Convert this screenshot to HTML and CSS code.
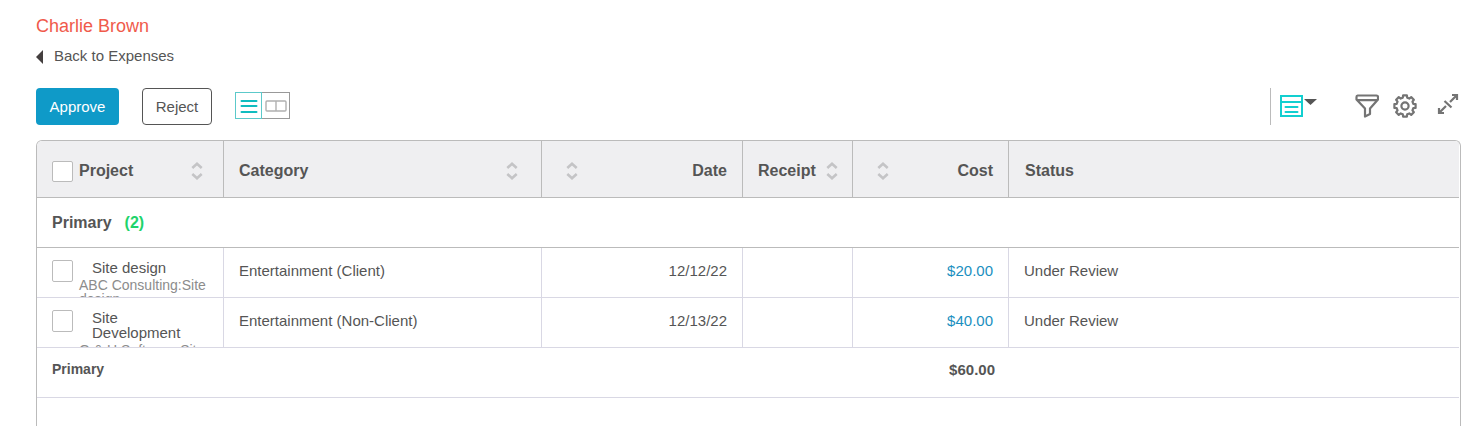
FILE: index.html
```html
<!DOCTYPE html>
<html lang="en">
<head>
<meta charset="utf-8">
<title>Expenses - Charlie Brown</title>
<link rel="stylesheet" href="styles.css">
</head>
<body>
<svg class="defs" aria-hidden="true">
  <symbol id="sort" viewBox="0 0 12 18"><path d="M1.300 6 6 1.800 10.700 6M1.300 12 6 16.200 10.700 12" fill="none" stroke="#c4c4c6" stroke-width="2.600"/></symbol>
</svg>
<header class="page-head">
  <h1 class="title">Charlie Brown</h1>
  <a class="back" href="#"><svg class="back-icon" viewBox="0 0 8 14" aria-hidden="true"><path d="M7 0v14L0 7z" fill="#443f3f"/></svg>Back to Expenses</a>
</header>
<div class="toolbar">
  <button class="btn btn-primary" type="button">Approve</button>
  <button class="btn btn-outline" type="button">Reject</button>
  <div class="view-toggle">
    <button class="view view-on" type="button" aria-label="List view"><svg width="18" height="16" viewBox="0 0 18 16"><path d="M1.500 3h15M1.500 8h15M1.500 14h15" stroke="#0fbcbf" stroke-width="2" stroke-linecap="round"/></svg></button>
    <button class="view" type="button" aria-label="Split view"><svg width="22" height="12" viewBox="0 0 22 12"><rect x="1" y="1" width="20" height="10" rx="1" fill="none" stroke="#b0b0b0" stroke-width="1.400"/><path d="M11 1v10" stroke="#b0b0b0" stroke-width="1.400"/></svg></button>
  </div>
  <div class="tools">
    <button class="tool tool-layout" type="button" aria-label="Layout"><svg width="37" height="24" viewBox="0 0 37 24"><path d="M1 2h21v20H1zM1 8h21" fill="none" stroke="#12cfd0" stroke-width="2"/><path d="M5.500 13h12M5.500 18h12" stroke="#12cfd0" stroke-width="2" stroke-linecap="round"/><path d="M24 5h13l-6.500 6z" fill="#555"/></svg></button>
    <button class="tool tool-filter" type="button" aria-label="Filter"><svg width="24" height="24" viewBox="0 0 24 24"><path d="M2.500 1.500h19q1.500 0 1.500 1.500v2.500L15 14.500v5.500l-5 2.500V14.500L1.500 5.500V3q0-1.500 1-1.500zM2 6.200h21" fill="none" stroke="#747474" stroke-width="2.200" stroke-linejoin="round"/></svg></button>
    <button class="tool tool-gear" type="button" aria-label="Settings"><svg width="24" height="24" viewBox="0 0 24 24"><path d="M10.100 1.400h3.800l.3 2.300 2.100.85 1.900-1.400 2.650 2.650-1.400 1.900.85 2.100 2.300.3v3.800l-2.300.3-.85 2.100 1.400 1.900-2.650 2.650-1.900-1.400-2.100.85-.3 2.300h-3.800l-.3-2.300-2.100-.85-1.900 1.400-2.650-2.650 1.400-1.900-.85-2.100-2.300-.3v-3.800l2.300-.3.850-2.100-1.400-1.900 2.650-2.650 1.900 1.400 2.100-.85z" fill="none" stroke="#747474" stroke-width="2.200" stroke-linejoin="round"/><circle cx="12" cy="12" r="3.600" fill="none" stroke="#747474" stroke-width="2.200"/></svg></button>
    <button class="tool tool-expand" type="button" aria-label="Expand"><svg width="22" height="22" viewBox="0 0 22 22"><path d="M13 9 20 2M15 2h5v5M9 13l-7 7M2 15v5h5M7.500 8l7 6.500" fill="none" stroke="#747474" stroke-width="2.200"/></svg></button>
  </div>
</div>
<main class="card">
<table class="grid">
  <colgroup><col class="c-project"><col class="c-category"><col class="c-date"><col class="c-receipt"><col class="c-cost"><col></colgroup>
  <thead>
    <tr>
      <th scope="col"><div class="head"><input class="check" type="checkbox" aria-label="Select all"><span>Project</span><svg class="sort sort-end-wide"><use href="#sort"/></svg></div></th>
      <th scope="col"><div class="head">Category<svg class="sort sort-end-far"><use href="#sort"/></svg></div></th>
      <th scope="col"><div class="head head-right"><svg class="sort"><use href="#sort"/></svg>Date</div></th>
      <th scope="col"><div class="head">Receipt<svg class="sort sort-end"><use href="#sort"/></svg></div></th>
      <th scope="col"><div class="head head-right"><svg class="sort"><use href="#sort"/></svg>Cost</div></th>
      <th scope="col"><div class="head head-status">Status</div></th>
    </tr>
  </thead>
  <tbody>
    <tr class="group"><th colspan="6" scope="rowgroup">Primary<span class="count">(2)</span></th></tr>
    <tr class="row">
      <td><div class="project"><input class="check" type="checkbox" aria-label="Select Site design"><div><div class="name">Site design</div><div class="client">ABC Consulting:Site design</div></div></div></td>
      <td>Entertainment (Client)</td><td class="num">12/12/22</td><td></td><td class="num"><a class="cost" href="#">$20.00</a></td><td>Under Review</td>
    </tr>
    <tr class="row">
      <td><div class="project"><input class="check" type="checkbox" aria-label="Select Site Development"><div><div class="name">Site Development</div><div class="client">G &amp; H Software:Site</div></div></div></td>
      <td>Entertainment (Non-Client)</td><td class="num">12/13/22</td><td></td><td class="num"><a class="cost" href="#">$40.00</a></td><td>Under Review</td>
    </tr>
    <tr class="total"><th colspan="4" scope="row">Primary</th><td class="num">$60.00</td><td></td></tr>
  </tbody>
</table>
</main>
</body>
</html>
```
FILE: styles.css
```css
* { box-sizing: border-box; }
body {
  margin: 0;
  height: 100vh;
  overflow: hidden;
  display: flex;
  flex-direction: column;
  padding: 16px 23px 0 36px;
  background: #fff;
  color: #555;
  font: 15px/20px "Liberation Sans", Arial, sans-serif;
}
button { padding: 0; background: none; border: 0; font: inherit; color: inherit; cursor: pointer; }
svg { display: block; }
.defs { position: absolute; width: 0; height: 0; }
.title { margin: 0; font-size: 18px; font-weight: 400; line-height: 20px; color: #f05a4b; }
.back { display: inline-flex; align-items: center; gap: 10px; margin-top: 10px; color: inherit; text-decoration: none; }
.back-icon { width: 8px; height: 14px; margin-top: 2px; }

.toolbar { display: flex; align-items: flex-start; margin-top: 19px; height: 52px; flex: none; }
.btn { height: 37px; min-width: 83px; border-radius: 4px; }
.btn-primary { background: #0f9ac8; color: #fff; }
.btn-outline { min-width: 70px; margin-left: 23px; border: 1px solid #555; }
.view-toggle { display: flex; margin: 4px 0 0 23px; }
.view { display: grid; place-items: center; width: 28px; height: 27px; border: 1px solid #999; border-left: 0; }
.view-on { width: 27px; border: 1px solid #5cc9ca; }
.tools { display: flex; align-items: flex-start; margin: 0 2px 0 auto; height: 37px; padding-left: 9px; border-left: 1px solid #bbb; }
.tool-layout { margin-top: 6px; }
.tool-filter { margin: 6px 0 0 38px; }
.tool-gear { margin: 6px 0 0 14px; }
.tool-expand { margin: 5px 0 0 20px; }

.card { flex: 1 0 auto; padding-right: 1px; border: 1px solid #bbb; border-bottom: 0; border-radius: 6px 6px 0 0; overflow: hidden; }
.grid { width: 100%; table-layout: fixed; border-collapse: separate; border-spacing: 0; }
.c-project { width: 187px; }
.c-category { width: 318px; }
.c-date { width: 201px; }
.c-receipt { width: 110px; }
.c-cost { width: 156px; }
.grid th, .grid td { padding: 0 15px; text-align: left; }
.grid thead th { height: 57px; padding-top: 3px; background: #efeff1; border-right: 1px solid #bbb; border-bottom: 1px solid #bbb; font-size: 16px; }
.grid thead th:last-child, .row td:last-child { border-right: 0; }
.head { display: flex; align-items: center; height: 24px; }
.head-right { justify-content: space-between; padding-left: 9px; }
.head-status { padding-left: 1px; }
.sort { width: 12px; height: 18px; margin-top: 1px; }
.sort-end { margin: 1px -1px 0 auto; }
.sort-end-wide { margin: 1px 5px 0 auto; }
.sort-end-far { margin: 1px 8px 0 auto; }
.check { appearance: none; flex: none; width: 21px; height: 21px; margin: 1px 6px 0 0; border: 1px solid #bbb; border-radius: 2px; background: #fff; }
.group th { height: 50px; border-bottom: 1px solid #bbb; font-size: 16px; }
.count { margin-left: 13px; color: #1fd36c; }
.grid .row td { height: 50px; border-right: 1px solid #d9d8e4; border-bottom: 1px solid #d9d8e4; padding-bottom: 3px; }
.grid .row td:last-child { border-right: 0; }
.grid .row td:first-child { padding-bottom: 0; }
.project { display: flex; height: 49px; overflow: hidden; padding-top: 12px; }
.project .check { height: 22px; margin-top: 0; }
.name { padding-left: 13px; line-height: 15px; }
.client { margin-top: 3px; font-size: 14px; line-height: 14px; color: #8c8c8c; }
.grid .num { text-align: right; }
.cost { color: #1b8fc0; text-decoration: none; }
.grid .total th, .grid .total td { height: 50px; padding-bottom: 5px; border-bottom: 1px solid #d9d8e4; font-weight: 700; }
.grid .total th { padding-bottom: 7px; font-size: 14px; }
.grid .total .num { padding-right: 14px; }
```
